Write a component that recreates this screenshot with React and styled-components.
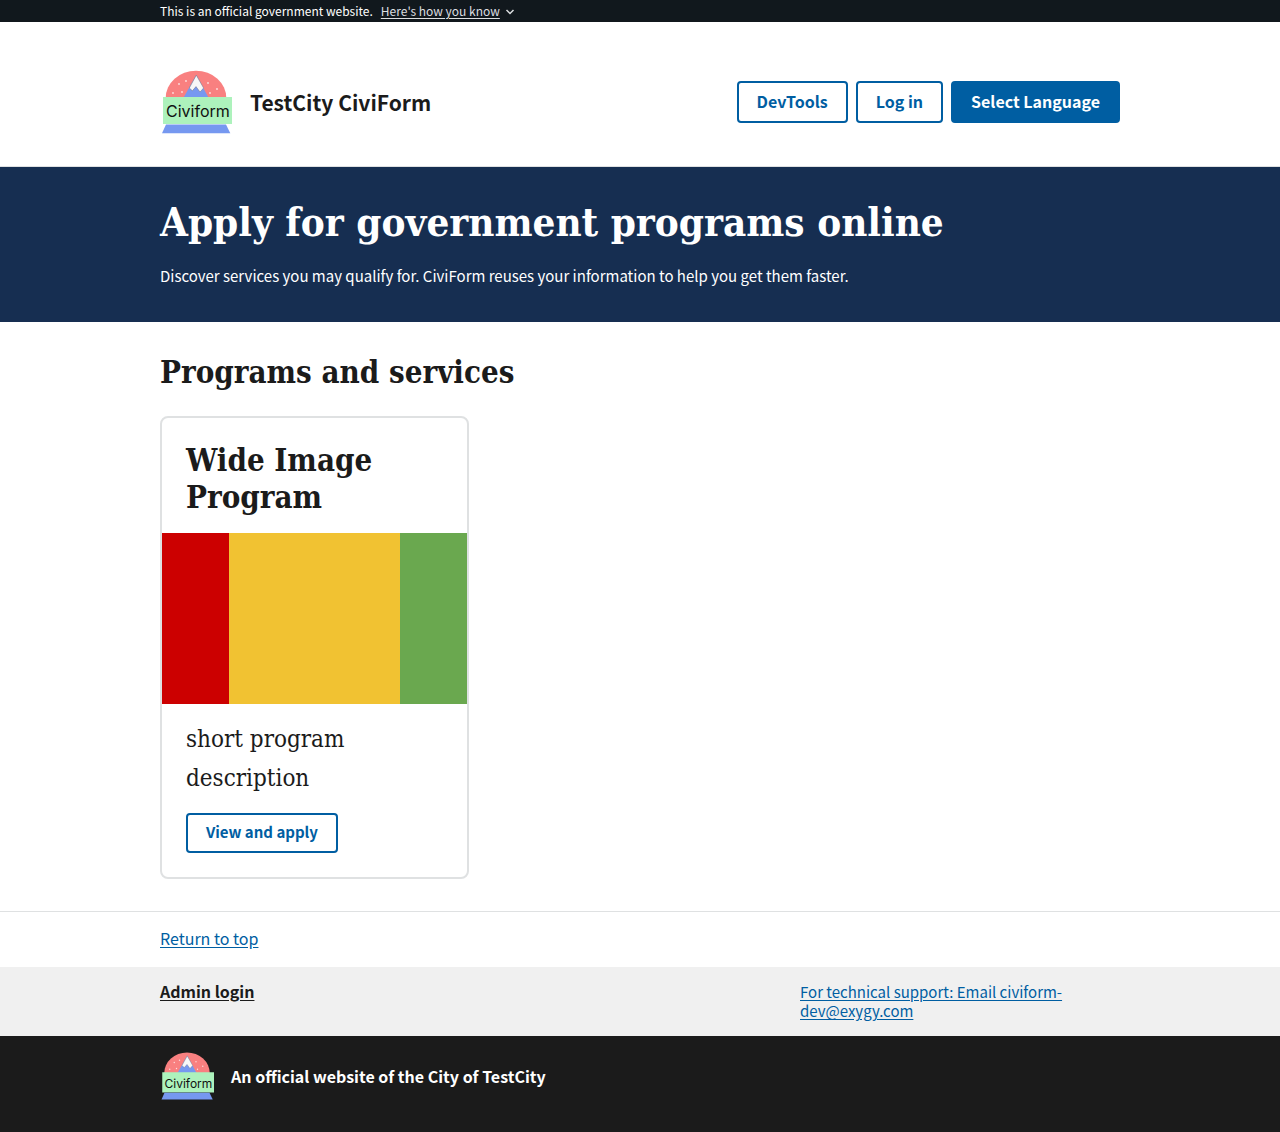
import React from "react";
import styled, { createGlobalStyle } from "styled-components";

const sans = `"Noto Sans CJK SC", "Noto Sans", sans-serif`;
const serif = `"DejaVu Serif Condensed", "DejaVu Serif", serif`;

const color = {
  ink: "#1b1b1b",
  link: "#005ea2",
  line: "#dfe1e2",
  navy: "#162e51",
  banner: "#11181d",
};

const GlobalStyle = createGlobalStyle`
  *, *::before, *::after { box-sizing: border-box; }
  body {
    margin: 0;
    background: #fff;
    color: ${color.ink};
    font-family: ${sans};
    font-size: 15px;
    line-height: 20px;
  }
  h1, h2, h3, p { margin: 0; }
`;

const Container = styled.div`
  width: 100%;
  max-width: 1024px;
  margin: 0 auto;
  padding: 0 32px;
`;

const Banner = styled.section`
  background: ${color.banner};
  color: #fff;
  font-size: 12px;
  line-height: 22px;
`;

const BannerRow = styled(Container)`
  display: flex;
  gap: 8px;
`;

const BannerToggle = styled.button`
  display: flex;
  align-items: center;
  gap: 5px;
  padding: 0;
  border: 0;
  background: none;
  color: #dcdee0;
  font: inherit;
  cursor: pointer;

  span { text-decoration: underline; text-underline-offset: 2px; }
`;

const Header = styled.header`
  border-bottom: 1px solid ${color.line};
`;

const HeaderRow = styled(Container)`
  display: flex;
  align-items: center;
  justify-content: space-between;
  padding-top: 44px;
  padding-bottom: 28px;
`;

const Brand = styled.a`
  display: flex;
  align-items: center;
  gap: 18px;
  color: ${color.ink};
  font-size: 21px;
  line-height: 28px;
  font-weight: 700;
  text-decoration: none;
`;

const Actions = styled.nav`
  display: flex;
  gap: 8px;
`;

const Button = styled.button`
  height: ${(p) => (p.$compact ? 40 : 42)}px;
  padding: 0 18px 2px;
  border: 2px solid ${color.link};
  border-radius: 4px;
  background: ${(p) => (p.$solid ? color.link : "#fff")};
  color: ${(p) => (p.$solid ? "#fff" : color.link)};
  font-family: ${sans};
  font-size: ${(p) => (p.$compact ? 15 : 16)}px;
  line-height: 20px;
  font-weight: 700;
  cursor: pointer;
`;

const Hero = styled.section`
  background: ${color.navy};
  color: #fff;
  padding: 31px 0 32px;
`;

const HeroTitle = styled.h1`
  margin-bottom: 17px;
  font-family: ${serif};
  font-size: 40px;
  line-height: 47px;
`;

const HeroText = styled.p`
  line-height: 28px;
`;

const Programs = styled(Container)`
  padding-top: 32px;
  padding-bottom: 32px;
`;

const SectionTitle = styled.h2`
  margin-bottom: 25px;
  font-family: ${serif};
  font-size: 31px;
  line-height: 37px;
`;

const CardGrid = styled.ul`
  display: grid;
  grid-template-columns: repeat(3, 1fr);
  gap: 16px;
  margin: 0;
  padding: 0;
  list-style: none;
`;

const Card = styled.li`
  border: 2px solid ${color.line};
  border-radius: 8px;
  overflow: hidden;
`;

const CardTitle = styled.h3`
  padding: 24px 24px 17px;
  font-family: ${serif};
  font-size: 31px;
  line-height: 37px;
`;

const CardImage = styled.div`
  aspect-ratio: 305 / 171;
  display: grid;
  grid-template-columns: 67fr 171fr 67fr;
`;

const Stripe = styled.span`
  background: ${(p) => p.$color};
`;

const CardBody = styled.div`
  display: flex;
  flex-direction: column;
  align-items: flex-start;
  gap: 15px;
  padding: 16px 24px 24px;
`;

const CardText = styled.p`
  font-family: ${serif};
  font-size: 24px;
  line-height: 39px;
`;

const ReturnBar = styled.div`
  border-top: 1px solid ${color.line};
  padding: 16px 0 18px;
`;

const Link = styled.a`
  color: ${(p) => (p.$strong ? color.ink : color.link)};
  font-size: ${(p) => (p.$small ? 15 : 16)}px;
  font-weight: ${(p) => (p.$strong ? 700 : 400)};
  text-decoration: underline;
  text-underline-offset: 2px;
`;

const LinksBar = styled.div`
  background: #f0f0f0;
  padding: 15px 0 16px;
  line-height: 19px;
`;

const LinksRow = styled(Container)`
  display: grid;
  grid-template-columns: 2fr 1fr;
`;

const Identifier = styled.div`
  background: ${color.ink};
  color: #fff;
  padding: 13px 0 29px;
  font-size: 16px;
  font-weight: 700;
`;

const IdentifierRow = styled(Container)`
  display: flex;
  align-items: center;
  gap: 17px;
`;

const dots = [
  [19, 18], [26, 15], [13, 27], [22, 26], [48, 17], [57, 23], [50, 27],
];

function Logo({ size }) {
  return (
    <svg width={size} height={size} viewBox="0 0 72 72" role="img" aria-label="Civiform logo">
      <path d="M5.7 32 A30.3 27.3 0 0 1 66.3 32 Z" fill="#f98080" />
      {dots.map(([x, y]) => (
        <circle key={`${x}-${y}`} cx={x} cy={y} r="0.9" fill="#fde0e0" />
      ))}
      <path d="M23.3 32 L36.3 9 L48.7 32 Z" fill="#7698f0" />
      <path
        d="M36.3 9.2 L29.3 22 L32.4 24.8 L36 20.6 L40 26 L43.6 22 Z"
        fill="#f7f7f7"
        stroke="#6a6f80"
        strokeWidth="0.5"
      />
      <rect x="3" y="31" width="69" height="27" fill="#adf2bc" />
      <path d="M6 58.4 H66 L70.3 67.3 H2 Z" fill="#7698f0" />
      <text x="6" y="51.4" fontFamily="Inter, sans-serif" fontSize="16" fontWeight="400" fill="#111">
        Civiform
      </text>
    </svg>
  );
}

export default function App() {
  return (
    <>
      <GlobalStyle />
      <Banner id="top" aria-label="Official government website">
        <BannerRow>
          <span>This is an official government website.</span>
          <BannerToggle type="button" aria-expanded="false">
            <span>Here's how you know</span>
            <svg width="10" height="8" viewBox="0 0 10 8" aria-hidden="true">
              <path d="M1.5 3 L5 6.5 L8.5 3" fill="none" stroke="currentColor" strokeWidth="1.5" />
            </svg>
          </BannerToggle>
        </BannerRow>
      </Banner>

      <Header>
        <HeaderRow>
          <Brand href="#top">
            <Logo size={72} />
            <span>TestCity CiviForm</span>
          </Brand>
          <Actions aria-label="Account">
            <Button type="button">DevTools</Button>
            <Button type="button">Log in</Button>
            <Button type="button" $solid>Select Language</Button>
          </Actions>
        </HeaderRow>
      </Header>

      <main>
        <Hero>
          <Container>
            <HeroTitle>Apply for government programs online</HeroTitle>
            <HeroText>
              Discover services you may qualify for. CiviForm reuses your information to help you get
              them faster.
            </HeroText>
          </Container>
        </Hero>

        <Programs>
          <SectionTitle>Programs and services</SectionTitle>
          <CardGrid>
            <Card>
              <CardTitle>Wide Image Program</CardTitle>
              <CardImage role="img" aria-label="Red, yellow and green stripes">
                <Stripe $color="#cc0000" />
                <Stripe $color="#f1c232" />
                <Stripe $color="#6aa84f" />
              </CardImage>
              <CardBody>
                <CardText>short program description</CardText>
                <Button type="button" $compact>View and apply</Button>
              </CardBody>
            </Card>
          </CardGrid>
        </Programs>
      </main>

      <footer>
        <ReturnBar>
          <Container>
            <Link href="#top">Return to top</Link>
          </Container>
        </ReturnBar>
        <LinksBar>
          <LinksRow>
            <div>
              <Link href="#admin" $strong>Admin login</Link>
            </div>
            <div>
              <Link href="mailto:civiform-dev@exygy.com" $small>
                For technical support: Email civiform-dev@exygy.com
              </Link>
            </div>
          </LinksRow>
        </LinksBar>
        <Identifier>
          <IdentifierRow>
            <Logo size={54} />
            <p>An official website of the City of TestCity</p>
          </IdentifierRow>
        </Identifier>
      </footer>
    </>
  );
}
